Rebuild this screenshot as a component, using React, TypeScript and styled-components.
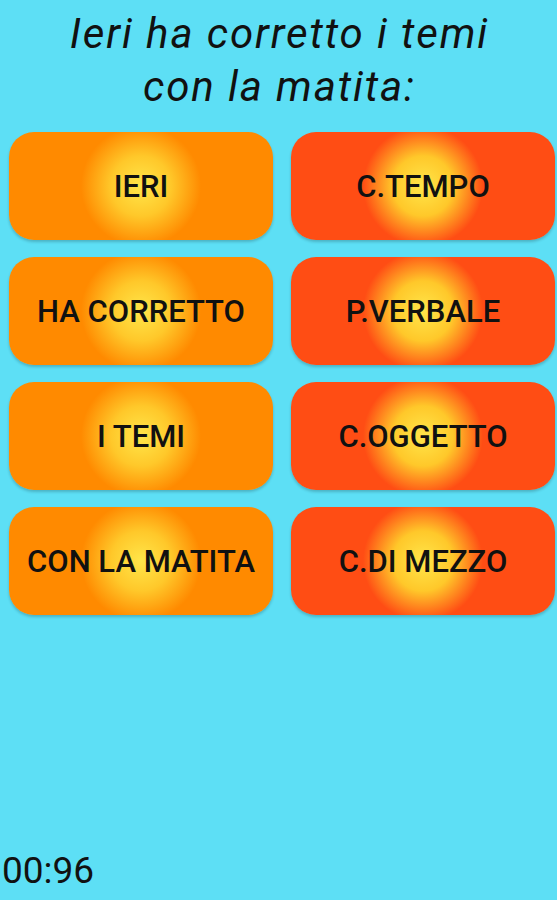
import React from 'react';
import styled, { createGlobalStyle } from 'styled-components';

const GlobalStyle = createGlobalStyle`
  html, body {
    margin: 0;
    padding: 0;
    background: #5ddff5;
  }
`;

const Screen = styled.div`
  display: flex;
  flex-direction: column;
  height: 900px;
  background: #5ddff5;
  font-family: Roboto, 'Liberation Sans', sans-serif;
  color: #111;
`;

const Title = styled.h1`
  margin: 0;
  padding: 7px 0 0 2px;
  font-size: 42px;
  font-weight: 400;
  font-style: italic;
  letter-spacing: 1.9px;
  line-height: 53px;
  text-align: center;
`;

const Grid = styled.div`
  display: grid;
  grid-template-columns: 264px 264px;
  column-gap: 18px;
  row-gap: 17px;
  padding: 19px 0 0 9px;
`;

const Tile = styled.button<{ $base: string }>`
  height: 108px;
  border: none;
  border-radius: 25px;
  padding: 0;
  display: flex;
  align-items: center;
  justify-content: center;
  font-family: Roboto, 'Liberation Sans', sans-serif;
  font-size: 31px;
  font-weight: 500;
  color: #111;
  background: radial-gradient(
    circle at 50% 50%,
    #ffe64a 0px,
    #ffc82a 30px,
    ${(p) => p.$base} 60px
  );
  box-shadow: 0 2px 3px rgba(0, 0, 0, 0.2);
`;

const Timer = styled.div`
  margin-top: auto;
  padding: 0 0 8px 2px;
  font-size: 37px;
  line-height: 42px;
`;

const words = ['IERI', 'HA CORRETTO', 'I TEMI', 'CON LA MATITA'];
const roles = ['C.TEMPO', 'P.VERBALE', 'C.OGGETTO', 'C.DI MEZZO'];

export default function App() {
  return (
    <Screen>
      <GlobalStyle />
      <Title>
        Ieri ha corretto i temi
        <br />
        con la matita:
      </Title>
      <Grid>
        {words.map((w, i) => (
          <React.Fragment key={w}>
            <Tile $base="#ff8a00">{w}</Tile>
            <Tile $base="#ff4d14">{roles[i]}</Tile>
          </React.Fragment>
        ))}
      </Grid>
      <Timer>00:96</Timer>
    </Screen>
  );
}
